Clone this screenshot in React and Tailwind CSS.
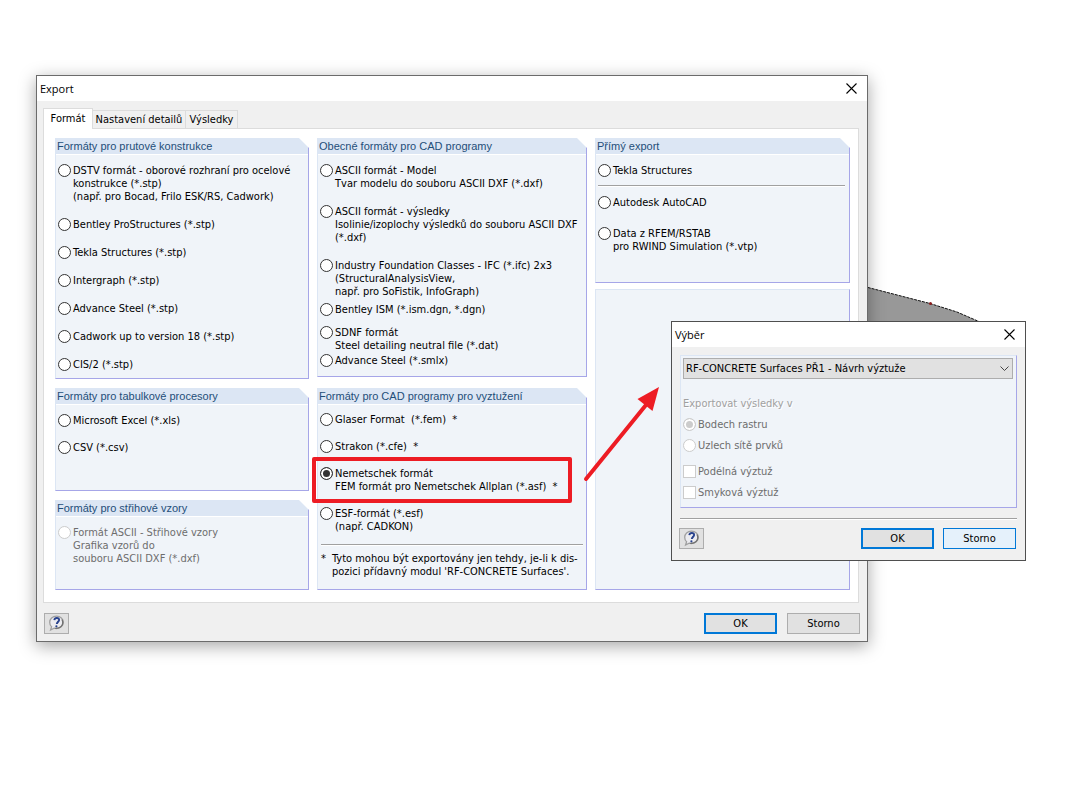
import { useState } from 'react';

const memberFormats = [
  { id: 'dstv', lines: ['DSTV formát - oborové rozhraní pro ocelové', 'konstrukce (*.stp)', '(např. pro Bocad, Frilo ESK/RS, Cadwork)'] },
  { id: 'bentley', lines: ['Bentley ProStructures (*.stp)'] },
  { id: 'tekla', lines: ['Tekla Structures (*.stp)'] },
  { id: 'intergraph', lines: ['Intergraph (*.stp)'] },
  { id: 'advance', lines: ['Advance Steel (*.stp)'] },
  { id: 'cadwork', lines: ['Cadwork up to version 18 (*.stp)'] },
  { id: 'cis2', lines: ['CIS/2 (*.stp)'] },
];

const tableFormats = [
  { id: 'xls', lines: ['Microsoft Excel (*.xls)'] },
  { id: 'csv', lines: ['CSV (*.csv)'] },
];

const patternFormats = [
  { id: 'pattern', disabled: true, lines: ['Formát ASCII - Střihové vzory', 'Grafika vzorů do', 'souboru ASCII DXF (*.dxf)'] },
];

const cadFormats = [
  { id: 'ascii-model', lines: ['ASCII formát - Model', 'Tvar modelu do souboru ASCII DXF (*.dxf)'] },
  { id: 'ascii-results', lines: ['ASCII formát - výsledky', 'Isolinie/izoplochy výsledků do souboru ASCII DXF', '(*.dxf)'] },
  { id: 'ifc', lines: ['Industry Foundation Classes - IFC (*.ifc) 2x3', '(StructuralAnalysisView,', 'např. pro SoFistik, InfoGraph)'] },
];

const bridgeFormats = [
  { id: 'ism', lines: ['Bentley ISM (*.ism.dgn, *.dgn)'] },
];

const steelFormats = [
  { id: 'sdnf', lines: ['SDNF formát', 'Steel detailing neutral file (*.dat)'] },
  { id: 'smlx', lines: ['Advance Steel (*.smlx)'] },
];

const reinforcementFormats = [
  { id: 'glaser', lines: ['Glaser Format  (*.fem)  *'] },
  { id: 'strakon', lines: ['Strakon (*.cfe)  *'] },
  { id: 'nemetschek', marked: true, lines: ['Nemetschek formát', 'FEM formát pro Nemetschek Allplan (*.asf)  *'] },
  { id: 'esf', lines: ['ESF-formát (*.esf)', '(např. CADKON)'] },
];

const directFormats = [
  { id: 'autocad', lines: ['Autodesk AutoCAD'] },
  { id: 'rwind', lines: ['Data z RFEM/RSTAB', 'pro RWIND Simulation (*.vtp)'] },
];

function Radio({ id, name, lines, checked, disabled, marked, onChange }) {
  return (
    <div className="relative flex gap-0.5">
      <input
        type="radio"
        id={id}
        name={name}
        checked={checked}
        disabled={disabled}
        onChange={onChange}
        className="size-[13px] shrink-0 appearance-none rounded-full border border-[#333333] bg-white checked:bg-[#333333] checked:shadow-[inset_0_0_0_2px_white] disabled:border-[#cccccc] disabled:checked:bg-[#cccccc]"
      />
      <label htmlFor={id} className={disabled ? 'text-[#6d6d6d]' : ''}>
        {lines.map((line) => (
          <span key={line} className="block whitespace-pre">{line}</span>
        ))}
      </label>
      {marked && (
        <div className="pointer-events-none absolute -inset-y-2.5 -left-2 w-[260px] rounded-xs border-4 border-[#ed1c24]" />
      )}
    </div>
  );
}

function RadioList({ items, value, onChange, className }) {
  return (
    <div className={`flex flex-col ${className}`}>
      {items.map((item) => (
        <Radio key={item.id} {...item} name="format" checked={value === item.id} onChange={() => onChange(item.id)} />
      ))}
    </div>
  );
}

function Group({ title, className, children }) {
  return (
    <section className={`relative border-r border-b border-l border-r-[#a6a6e8] border-b-[#a6a6e8] border-l-[#dce6f4] bg-[#f0f4f9] ${className}`}>
      <h2 className="h-[17px] border-b border-white bg-[#dce6f4] pl-px font-['Liberation_Sans',sans-serif] text-[11px]/4 text-[#1f4e79]">
        {title}
      </h2>
      {/* cut corner */}
      <div className="absolute top-0 -right-px size-2.5 bg-white [clip-path:polygon(0_0,100%_0,100%_100%)]" />
      {children}
    </section>
  );
}

function Separator() {
  return <div className="h-0.5 border-t border-[#a0a0a0] bg-white" />;
}

function TitleBar({ title }) {
  return (
    <header className="flex h-[25px] items-center justify-between bg-white pr-2.5 pl-[3px]">
      <h1 className="font-['Open_Sans',sans-serif] text-[11px]/4">{title}</h1>
      <button type="button" aria-label="Zavřít">
        <svg width="11" height="11" viewBox="0 0 11 11" stroke="#000" strokeWidth="1.1">
          <path d="M.5 .5l10 10M10.5 .5l-10 10" />
        </svg>
      </button>
    </header>
  );
}

function HelpButton() {
  return (
    <button type="button" aria-label="Nápověda" className="mr-auto flex h-[21px] w-[25px] items-center justify-center border border-[#adadad] bg-[#e1e1e1]">
      <svg width="17" height="17" viewBox="0 0 17 17" fill="none">
        <path d="M8.5 1.2c4 0 6.700 2.600 6.700 6s-2.700 6.300-6.700 6.300c-.9 0-1.700-.1-2.400-.4L2.600 15l1-3.200C2.300 10.700 1.700 9 1.700 7.300c0-3.500 2.800-6.100 6.800-6.100z" fill="#ececf0" stroke="#a0a0a0" strokeWidth="1.300" />
        <path d="M14 4.500c1.200 2.500.8 5.500-1.200 7.300-1.500 1.300-3.500 1.800-5.600 1.500" stroke="#707070" strokeWidth="1.300" />
        <path d="M6.300 5.100C6.500 3.700 7.500 3 8.800 3c1.500 0 2.400.8 2.300 2-.1 1.600-2.100 2-2.300 4" stroke="#27418c" strokeWidth="1.900" />
        <circle cx="8.400" cy="11.300" r="1.100" fill="#27418c" />
      </svg>
    </button>
  );
}

function PushButton({ variant, children }) {
  const styles = {
    primary: 'border-2 border-[#0078d7] bg-[#e1e1e1]',
    hover: 'border border-[#0078d7] bg-[#e5f1fb]',
    plain: 'border border-[#adadad] bg-[#e1e1e1]',
  };
  return (
    <button type="button" className={`flex h-[21px] w-[73px] items-center justify-center ${styles[variant]}`}>
      {children}
    </button>
  );
}

function ExportWindow() {
  const [format, setFormat] = useState('nemetschek');

  return (
    <div className="absolute top-[75px] left-9 w-[832px] border border-[#6b6b6b] bg-[#f0f0f0] shadow-[0_4px_16px_rgba(0,0,0,0.35)]">
      <TitleBar title="Export" />

      <div className="px-1.5 pt-[7px]">
        <nav role="tablist" className="relative -mb-px flex items-end">
          <button type="button" role="tab" aria-selected="true" className="h-[21px] w-[50px] border border-b-0 border-[#dcdcdc] bg-white pb-0.5">
            Formát
          </button>
          <button type="button" role="tab" aria-selected="false" className="h-[19px] w-[93px] border-y border-r border-[#dcdcdc]">
            Nastavení detailů
          </button>
          <button type="button" role="tab" aria-selected="false" className="h-[19px] w-[52px] border-y border-r border-[#dcdcdc]">
            Výsledky
          </button>
        </nav>

        <main className="mr-0.5 grid grid-cols-[254px_1fr_255px] gap-2 border border-[#dcdcdc] bg-white px-2 pt-[9px] pb-3 pl-[11px]">
          <div className="flex flex-col gap-[9px]">
            <Group title="Formáty pro prutové konstrukce" className="h-[241px]">
              <RadioList items={memberFormats} value={format} onChange={setFormat} className="gap-[15px] px-0.5 pt-[9px]" />
            </Group>
            <Group title="Formáty pro tabulkové procesory" className="h-[103px]">
              <RadioList items={tableFormats} value={format} onChange={setFormat} className="gap-3.5 px-0.5 pt-[9px]" />
            </Group>
            <Group title="Formáty pro střihové vzory" className="flex-1">
              <RadioList items={patternFormats} value={format} onChange={setFormat} className="px-0.5 pt-[9px]" />
            </Group>
          </div>

          <div className="flex flex-col gap-[11px]">
            <Group title="Obecné formáty pro CAD programy" className="h-[239px]">
              <RadioList items={cadFormats} value={format} onChange={setFormat} className="gap-[15px] px-0.5 pt-[9px]" />
              <RadioList items={bridgeFormats} value={format} onChange={setFormat} className="px-0.5 pt-[5px]" />
              <RadioList items={steelFormats} value={format} onChange={setFormat} className="gap-0.5 px-0.5 pt-2.5" />
            </Group>
            <Group title="Formáty pro CAD programy pro vyztužení" className="flex-1">
              <RadioList items={reinforcementFormats} value={format} onChange={setFormat} className="gap-3.5 px-0.5 pt-2" />
              <div className="px-[3px] pt-[11px]">
                <Separator />
                <p className="flex gap-1.5 pt-1.5 whitespace-nowrap">
                  <span>*</span>
                  <span>
                    Tyto mohou být exportovány jen tehdy, je-li k dis-
                    <br />
                    pozici přídavný modul 'RF-CONCRETE Surfaces'.
                  </span>
                </p>
              </div>
            </Group>
          </div>

          <div className="flex h-[452px] flex-col gap-1.5">
            <Group title="Přímý export" className="h-[145px]">
              <div className="flex flex-col px-0.5 pt-[9px]">
                <Radio id="direct-tekla" name="format" lines={['Tekla Structures']} checked={format === 'direct-tekla'} onChange={() => setFormat('direct-tekla')} />
                <div className="pt-2 pr-0.5 pb-[9px]">
                  <Separator />
                </div>
                <RadioList items={directFormats} value={format} onChange={setFormat} className="gap-[18px]" />
              </div>
            </Group>
            <div className="flex-1 border border-t-[#dce6f4] border-r-[#a6a6e8] border-b-[#a6a6e8] border-l-[#dce6f4] bg-[#f0f4f9]" />
          </div>
        </main>
      </div>

      <footer className="flex gap-2.5 px-[7px] pt-2.5 pb-[7px]">
        <HelpButton />
        <PushButton variant="primary">OK</PushButton>
        <PushButton variant="plain">Storno</PushButton>
      </footer>
    </div>
  );
}

function SelectionDialog() {
  return (
    <div className="absolute top-[321px] left-[671px] w-[355px] border border-[#4f4f4f] bg-[#f0f0f0]">
      <TitleBar title="Výběr" />

      <div className="px-2 pt-2">
        <div className="h-[153px] border border-t-[#dce6f4] border-r-[#a6a6e8] border-b-[#a6a6e8] border-l-[#dce6f4] bg-[#f0f4f9] pt-0.5 pr-[3px] pl-0.5">
          <div className="relative">
            <select aria-label="Případ" className="block h-[21px] w-full appearance-none border border-[#adadad] bg-[#e1e1e1] pl-0.5">
              <option>RF-CONCRETE Surfaces PŘ1 - Návrh výztuže</option>
            </select>
            <svg className="pointer-events-none absolute top-2 right-1" width="9" height="6" viewBox="0 0 9 6" fill="none" stroke="#444">
              <path d="M.5 .5l4 4 4-4" />
            </svg>
          </div>

          <fieldset disabled className="flex flex-col gap-2">
            <legend className="pt-[18px] pb-2 text-[#a0a0a0] [text-shadow:1px_1px_0_white]">Exportovat výsledky v</legend>
            <Radio id="grid-points" name="results" lines={['Bodech rastru']} checked disabled onChange={() => {}} />
            <Radio id="mesh-nodes" name="results" lines={['Uzlech sítě prvků']} disabled checked={false} onChange={() => {}} />
          </fieldset>

          <div className="flex flex-col gap-2 pt-[13px] text-[#6d6d6d]">
            <label className="flex gap-0.5">
              <input type="checkbox" disabled className="size-[13px] appearance-none border border-[#cccccc] bg-white" />
              Podélná výztuž
            </label>
            <label className="flex gap-0.5">
              <input type="checkbox" disabled className="size-[13px] appearance-none border border-[#cccccc] bg-white" />
              Smyková výztuž
            </label>
          </div>
        </div>

        <div className="pt-2.5">
          <Separator />
        </div>
      </div>

      <footer className="flex gap-[9px] pt-2 pr-[9px] pb-[11px] pl-[7px]">
        <HelpButton />
        <PushButton variant="primary">OK</PushButton>
        <PushButton variant="hover">Storno</PushButton>
      </footer>
    </div>
  );
}

export default function App() {
  return (
    <div className="relative min-h-screen overflow-hidden bg-white font-['DejaVu_Sans_Condensed','DejaVu_Sans',sans-serif] text-[11px]/[13px] text-black">
      {/* model surface behind the windows */}
      <svg className="absolute top-[280px] left-[860px]" width="180" height="160" viewBox="0 0 180 160">
        <path d="M0 5.500L8 7.500L70 23.500L97 32L120 42L166 100V145H0z" fill="#989898" />
        <path d="M0 5.500L8 7.500L70 23.500L97 32L120 42" fill="none" stroke="#111" strokeDasharray="3 1" />
        <path d="M165 143h1" stroke="#000" />
        <circle cx="70.500" cy="23.500" r="1.500" fill="#8b1a1a" />
      </svg>

      <ExportWindow />

      {/* arrow from the marked format to the dialog */}
      <svg className="pointer-events-none absolute top-[380px] left-[580px]" width="90" height="110" viewBox="0 0 90 110">
        <path d="M6 99L70 20" stroke="#ed1c24" strokeWidth="4" strokeLinecap="round" />
        <path d="M79 7L57.500 19L72.500 31z" fill="#ed1c24" />
      </svg>

      <SelectionDialog />
    </div>
  );
}
